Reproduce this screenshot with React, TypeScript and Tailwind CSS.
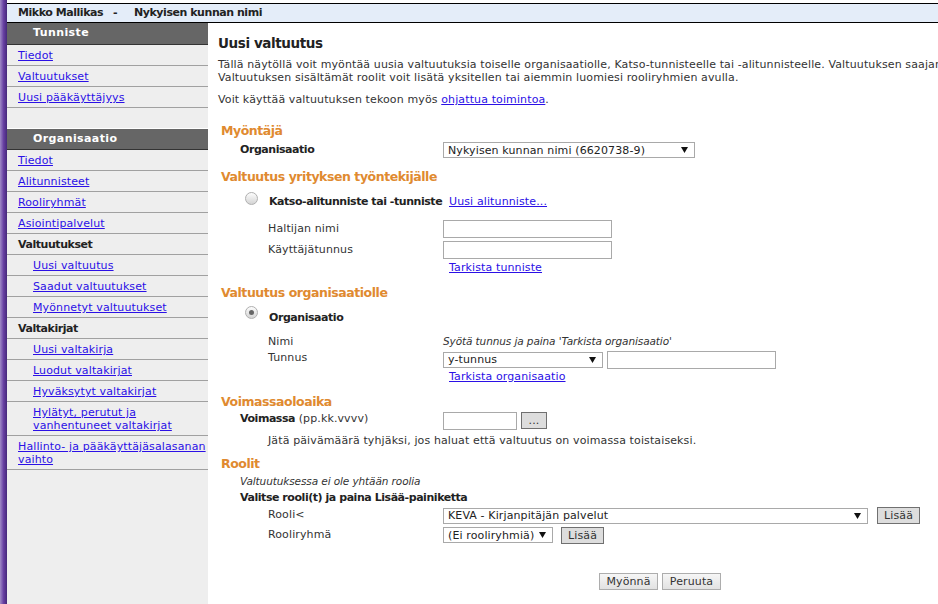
import React from 'react'

const link = 'text-[#2b10e6] underline'
const bold = 'font-bold text-[#222] tracking-[-0.45px]'
const ital = 'italic text-[10.5px] tracking-[-0.1px]'

function Radio({ checked }: { checked?: boolean }) {
  return (
    <div className='w-[13px] h-[13px] rounded-full border border-[#b0b0b0] bg-linear-to-b from-[#fdfdfd] to-[#d4d4d4] flex items-center justify-center shrink-0'>
      {checked && <div className='w-[5px] h-[5px] rounded-full bg-[#666]' />}
    </div>
  )
}

function Select({ text, w }: { text: string; w: string }) {
  return (
    <div className={`${w} h-[16px] border border-[#a9a9a9] bg-white flex items-center justify-between pl-[4px] pr-[6px] shrink-0`}>
      <span className='leading-[13px] text-[#222] whitespace-nowrap'>{text}</span>
      <svg width='7' height='6' viewBox='0 0 7 6'>
        <polygon points='0,0 7,0 3.5,6' fill='#111' />
      </svg>
    </div>
  )
}

function Input({ w }: { w: string }) {
  return <div className={`${w} h-[18px] border border-[#a9a9a9] bg-white shrink-0`} />
}

function Btn({ children, w, dark }: { children: React.ReactNode; w: string; dark?: boolean }) {
  return (
    <div
      className={`${w} h-[17px] flex items-center justify-center leading-[13px] text-[#333] shrink-0 ${
        dark ? 'border border-[#707070] bg-[#dddddd]' : 'border border-[#adadad] bg-linear-to-b from-[#f6f6f6] to-[#e2e2e2]'
      }`}
    >
      {children}
    </div>
  )
}

function Item({ children, indent, isBold }: { children: React.ReactNode; indent?: boolean; isBold?: boolean }) {
  return (
    <div className={`border-b border-[#a0a0a0] pt-[4px] pb-[3px] leading-[13px] ${indent ? 'pl-[26px]' : 'pl-[11px]'}`}>
      {isBold ? <span className={bold}>{children}</span> : <span className={link}>{children}</span>}
    </div>
  )
}

function Heading({ children, mt }: { children: React.ReactNode; mt: string }) {
  return (
    <div className={`${mt} pl-[13px] h-[16px] leading-[16px] text-[12.5px] font-bold tracking-[-0.45px] text-[#e08a30] whitespace-nowrap`}>
      {children}
    </div>
  )
}

export default function App() {
  return (
    <div className="flex h-[604px] w-full overflow-hidden bg-white text-[11px] tracking-[0.12px] text-[#333] font-['DejaVu_Sans',Verdana,sans-serif]">
      <div className='w-[7px] shrink-0 bg-linear-to-r from-[#a08ac6] via-[#6840a2] to-[#45287a]' />
      <div className='flex-1 min-w-0 flex flex-col'>
        {/* top bar */}
        <div className={`mt-[3px] h-[20px] border-y border-black bg-[#e4edf9] flex items-center pl-[11px] whitespace-nowrap ${bold}`}>
          <span className='w-[95px]'>Mikko Mallikas</span>
          <span className='w-[21px]'>-</span>
          <span>Nykyisen kunnan nimi</span>
        </div>

        <div className='flex flex-1 min-h-0'>
          {/* sidebar */}
          <div className='w-[201px] shrink-0 bg-[#eeeeee]'>
            <div className='h-[22px] border-b border-[#333] bg-[#666666] flex items-center pl-[26px] font-bold text-white tracking-[0.4px]'>
              Tunniste
            </div>
            <Item>Tiedot</Item>
            <Item>Valtuutukset</Item>
            <Item>Uusi pääkäyttäjyys</Item>

            <div className='mt-[20px] h-[22px] border-t border-white border-b border-b-[#333] bg-[#666666] flex items-center pl-[26px] font-bold text-white tracking-[0.4px]'>
              Organisaatio
            </div>
            <Item>Tiedot</Item>
            <Item>Alitunnisteet</Item>
            <Item>Rooliryhmät</Item>
            <Item>Asiointipalvelut</Item>
            <Item isBold>Valtuutukset</Item>
            <Item indent>Uusi valtuutus</Item>
            <Item indent>Saadut valtuutukset</Item>
            <Item indent>Myönnetyt valtuutukset</Item>
            <Item isBold>Valtakirjat</Item>
            <Item indent>Uusi valtakirja</Item>
            <Item indent>Luodut valtakirjat</Item>
            <Item indent>Hyväksytyt valtakirjat</Item>
            <Item indent>
              Hylätyt, perutut ja
              <br />
              vanhentuneet valtakirjat
            </Item>
            <Item>
              Hallinto- ja pääkäyttäjäsalasanan
              <br />
              vaihto
            </Item>
          </div>

          {/* main */}
          <div className='flex-1 min-w-0 overflow-hidden'>
            <div className='pl-[10px] pt-[9px]'>
              <div className='h-[22px] leading-[22px] text-[13.5px] font-bold tracking-[-0.4px] text-[#222]'>Uusi valtuutus</div>
              <div className='mt-[4px] leading-[13px] whitespace-nowrap'>
                Tällä näytöllä voit myöntää uusia valtuutuksia toiselle organisaatiolle, Katso-tunnisteelle tai -alitunnisteelle. Valtuutuksen saajana
                <br />
                Valtuutuksen sisältämät roolit voit lisätä yksitellen tai aiemmin luomiesi rooliryhmien avulla.
              </div>
              <div className='mt-[9px] leading-[13px] whitespace-nowrap'>
                Voit käyttää valtuutuksen tekoon myös <span className={link}>ohjattua toimintoa</span>.
              </div>
            </div>

            <Heading mt='mt-[17px]'>Myöntäjä</Heading>
            <div className='mt-[1px] h-[20px] flex items-center'>
              <div className={`w-[235px] pl-[32px] ${bold}`}>Organisaatio</div>
              <Select text='Nykyisen kunnan nimi (6620738-9)' w='w-[252px]' />
            </div>

            <Heading mt='mt-[9px]'>Valtuutus yrityksen työntekijälle</Heading>
            <div className='mt-[6px] h-[22px] flex items-start'>
              <div className='w-[235px] shrink-0 pl-[37px] flex items-start'>
                <div className='mt-[1px]'>
                  <Radio />
                </div>
                <div className={`ml-[11px] pt-[4px] leading-[13px] whitespace-nowrap ${bold}`}>Katso-alitunniste tai -tunniste</div>
              </div>
              <div className={`pt-[4px] pl-[6px] leading-[13px] ${link}`}>Uusi alitunniste...</div>
            </div>
            <div className='mt-[6px] h-[20px] flex items-center'>
              <div className='w-[235px] pl-[60px]'>Haltijan nimi</div>
              <Input w='w-[169px]' />
            </div>
            <div className='mt-[1px] h-[20px] flex items-center'>
              <div className='w-[235px] pl-[60px]'>Käyttäjätunnus</div>
              <Input w='w-[169px]' />
            </div>
            <div className='mt-[1px] h-[14px] leading-[13px] pl-[241px]'>
              <span className={link}>Tarkista tunniste</span>
            </div>

            <Heading mt='mt-[10px]'>Valtuutus organisaatiolle</Heading>
            <div className='mt-[4px] h-[22px] flex items-start'>
              <div className='w-[235px] pl-[37px] flex items-start'>
                <div className='mt-[1px]'>
                  <Radio checked />
                </div>
                <div className={`ml-[11px] pt-[6px] leading-[13px] ${bold}`}>Organisaatio</div>
              </div>
            </div>
            <div className='mt-[7px] h-[16px] flex items-center'>
              <div className='w-[235px] pl-[60px]'>Nimi</div>
              <div className={`whitespace-nowrap ${ital}`}>Syötä tunnus ja paina 'Tarkista organisaatio'</div>
            </div>
            <div className='h-[19px] flex items-center'>
              <div className='w-[235px] pl-[60px] self-start pt-[1px] leading-[13px]'>Tunnus</div>
              <Select text='y-tunnus' w='w-[160px]' />
              <div className='ml-[4px]'>
                <Input w='w-[169px]' />
              </div>
            </div>
            <div className='mt-[1px] h-[14px] leading-[13px] pl-[241px]'>
              <span className={link}>Tarkista organisaatio</span>
            </div>

            <Heading mt='mt-[10px]'>Voimassaoloaika</Heading>
            <div className='mt-[1px] h-[19px] flex items-center'>
              <div className='w-[235px] pl-[32px] self-start pt-[1px] leading-[13px]'>
                <span className={bold}>Voimassa</span> (pp.kk.vvvv)
              </div>
              <Input w='w-[74px]' />
              <div className='ml-[4px]'>
                <Btn w='w-[26px]' dark>
                  ...
                </Btn>
              </div>
            </div>
            <div className='mt-[4px] pl-[60px] leading-[13px] whitespace-nowrap'>
              Jätä päivämäärä tyhjäksi, jos haluat että valtuutus on voimassa toistaiseksi.
            </div>

            <Heading mt='mt-[9px]'>Roolit</Heading>
            <div className={`mt-[3px] pl-[32px] leading-[13px] ${ital}`}>Valtuutuksessa ei ole yhtään roolia</div>
            <div className={`mt-[3px] pl-[32px] leading-[13px] ${bold}`}>Valitse rooli(t) ja paina Lisää-painiketta</div>
            <div className='mt-[2px] h-[19px] flex items-center'>
              <div className='w-[235px] pl-[60px]'>Rooli&lt;</div>
              <Select text='KEVA - Kirjanpitäjän palvelut' w='w-[425px]' />
              <div className='ml-[9px]'>
                <Btn w='w-[43px]' dark>
                  Lisää
                </Btn>
              </div>
            </div>
            <div className='mt-[1px] h-[18px] flex items-center'>
              <div className='w-[235px] pl-[60px]'>Rooliryhmä</div>
              <Select text='(Ei rooliryhmiä)' w='w-[110px]' />
              <div className='ml-[8px]'>
                <Btn w='w-[43px]' dark>
                  Lisää
                </Btn>
              </div>
            </div>

            <div className='mt-[29px] flex pl-[391px]'>
              <Btn w='w-[59px]'>Myönnä</Btn>
              <div className='ml-[4px]'>
                <Btn w='w-[59px]'>Peruuta</Btn>
              </div>
            </div>
          </div>
        </div>
      </div>
    </div>
  )
}
